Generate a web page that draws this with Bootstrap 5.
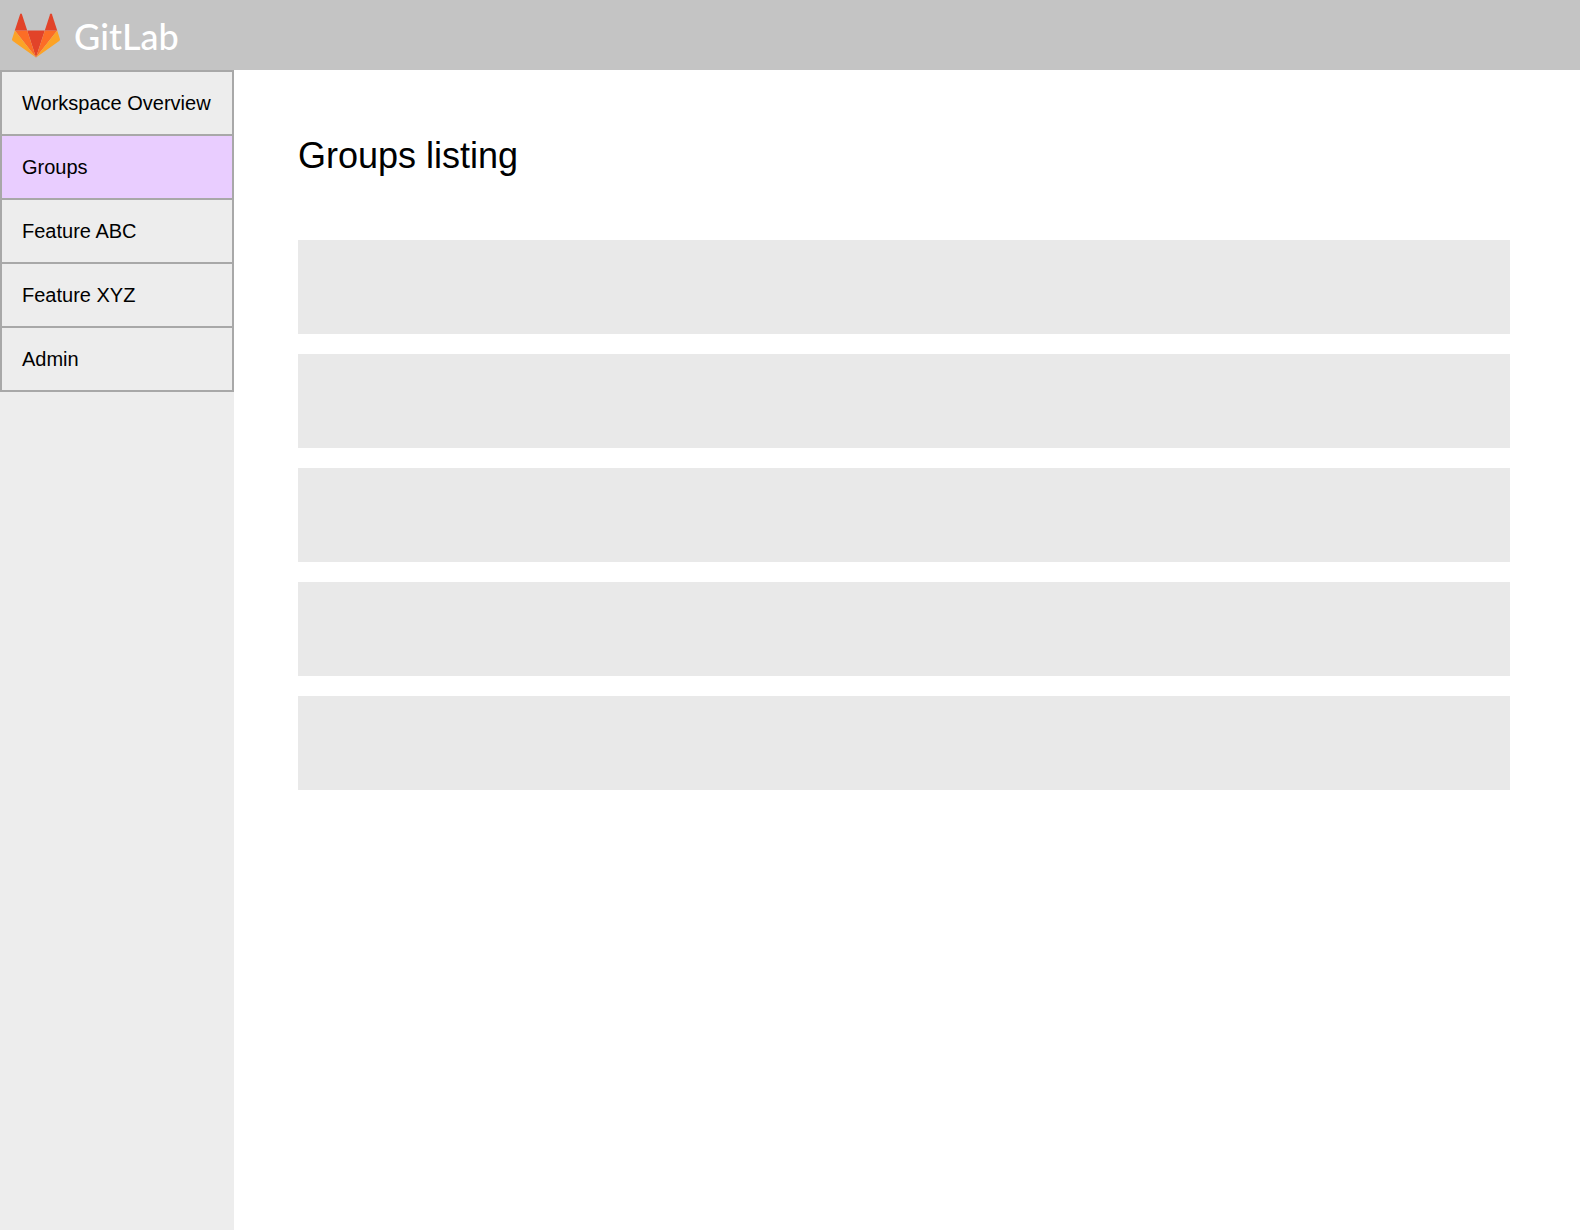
<!DOCTYPE html>
<html lang="en">
<head>
<meta charset="utf-8">
<meta name="viewport" content="width=device-width, initial-scale=1">
<title>Groups listing</title>
<link href="https://cdn.jsdelivr.net/npm/bootstrap@5.3.0/dist/css/bootstrap.min.css" rel="stylesheet">
<style>
  body { font-family: "Liberation Sans", Arial, sans-serif; color: #000; }
  .top-bar { height: 70px; padding: 0 12px; background: #c4c4c4; }
  .wordmark { font-family: Lato, sans-serif; font-size: 36px; font-weight: 500; line-height: 44px; padding: 2px 0 0 14px; }
  .side { width: 234px; background: #ededed; }
  .side .list-group {
    --bs-list-group-bg: #ededed;
    --bs-list-group-color: #000;
    --bs-list-group-action-color: #000;
    --bs-list-group-border-color: #a8a8a8;
    --bs-list-group-border-width: 2px;
    --bs-list-group-item-padding-x: 20px;
    --bs-list-group-item-padding-y: 16px;
    --bs-list-group-active-bg: #e9cdff;
    --bs-list-group-active-color: #000;
    --bs-list-group-active-border-color: #a8a8a8;
    --bs-list-group-border-radius: 0;
    font-size: 20px;
    line-height: 30px;
  }
  .content { padding: 64px 70px 64px 64px; }
  .page-title { font-size: 36px; line-height: 44px; margin-bottom: 62px; }
  .group-list { gap: 20px; }
  .group-row { height: 94px; background: #e9e9e9; }
</style>
</head>
<body class="d-flex flex-column min-vh-100 bg-white">
<header class="top-bar d-flex align-items-center">
  <a href="#" class="d-flex align-items-center text-decoration-none text-white">
    <svg width="48" height="45" viewBox="0 0 48 45" aria-hidden="true">
      <path fill="#e24329" d="M24 44.5 32.8 17.6H15.2z"/>
      <path fill="#fc6d26" d="M24 44.5 15.2 17.6H2.8z"/>
      <path fill="#fca326" d="M2.8 17.6.1 25.9a1.8 1.8 0 0 0 .7 2L24 44.5z"/>
      <path fill="#e24329" d="M2.8 17.6H15.2L9.9 1.2a.95.95 0 0 0-1.8 0z"/>
      <path fill="#fc6d26" d="M24 44.5 32.8 17.6H45.2z"/>
      <path fill="#fca326" d="M45.2 17.6 47.9 25.9a1.8 1.8 0 0 1-.7 2L24 44.5z"/>
      <path fill="#e24329" d="M45.2 17.6H32.8L38.1 1.2a.95.95 0 0 1 1.8 0z"/>
    </svg>
    <span class="wordmark">GitLab</span>
  </a>
</header>
<div class="d-flex flex-grow-1">
  <nav class="side flex-shrink-0" aria-label="Workspace">
    <div class="list-group">
      <a href="#" class="list-group-item list-group-item-action">Workspace Overview</a>
      <a href="#" class="list-group-item list-group-item-action active" aria-current="page">Groups</a>
      <a href="#" class="list-group-item list-group-item-action">Feature ABC</a>
      <a href="#" class="list-group-item list-group-item-action">Feature XYZ</a>
      <a href="#" class="list-group-item list-group-item-action">Admin</a>
    </div>
  </nav>
  <main class="content flex-grow-1">
    <h1 class="page-title fw-normal">Groups listing</h1>
    <ul class="group-list list-unstyled d-flex flex-column mb-0">
      <li class="group-row"></li>
      <li class="group-row"></li>
      <li class="group-row"></li>
      <li class="group-row"></li>
      <li class="group-row"></li>
    </ul>
  </main>
</div>
<script src="https://cdn.jsdelivr.net/npm/bootstrap@5.3.0/dist/js/bootstrap.bundle.min.js"></script>
</body>
</html>
